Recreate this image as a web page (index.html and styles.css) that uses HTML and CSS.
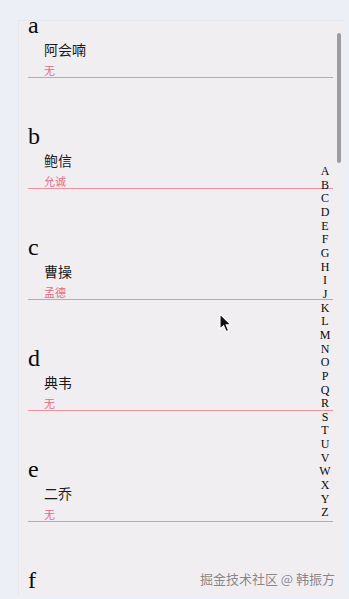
FILE: index.html
```html
<!DOCTYPE html>
<html lang="zh">
<head>
<meta charset="utf-8">
<title>通讯录</title>
<link rel="stylesheet" href="styles.css">
</head>
<body>
<div class="panel">
  <div class="list">
    <section class="group">
      <h2 class="letter">a</h2>
      <div class="name">阿会喃</div>
      <div class="sub">无</div>
    </section>
    <section class="group">
      <h2 class="letter">b</h2>
      <div class="name">鲍信</div>
      <div class="sub">允诚</div>
    </section>
    <section class="group">
      <h2 class="letter">c</h2>
      <div class="name">曹操</div>
      <div class="sub">孟德</div>
    </section>
    <section class="group">
      <h2 class="letter">d</h2>
      <div class="name">典韦</div>
      <div class="sub">无</div>
    </section>
    <section class="group">
      <h2 class="letter">e</h2>
      <div class="name">二乔</div>
      <div class="sub">无</div>
    </section>
    <section class="group">
      <h2 class="letter">f</h2>
      <div class="name">法正</div>
      <div class="sub">孝直</div>
    </section>
  </div>
  <div class="scrollbar"></div>
  <ul class="index">
    <li>A</li><li>B</li><li>C</li><li>D</li><li>E</li><li>F</li><li>G</li><li>H</li><li>I</li><li>J</li><li>K</li><li>L</li><li>M</li><li>N</li><li>O</li><li>P</li><li>Q</li><li>R</li><li>S</li><li>T</li><li>U</li><li>V</li><li>W</li><li>X</li><li>Y</li><li>Z</li>
  </ul>
</div>
<div class="watermark">掘金技术社区 @ 韩振方</div>
<svg class="cursor" width="13" height="20" viewBox="0 0 13 20">
  <path d="M1 1 L1 16 L4.6 12.6 L7.2 18.6 L9.6 17.6 L7.1 11.8 L12 11.8 Z" fill="#111" stroke="#fff" stroke-width="1.1" stroke-linejoin="round"/>
</svg>
</body>
</html>
```

FILE: styles.css
```css
html, body {
  margin: 0;
  padding: 0;
}
body {
  width: 349px;
  height: 599px;
  overflow: hidden;
  background: #eceff5;
  position: relative;
  font-family: "Liberation Serif", "Noto Sans CJK SC", serif;
}
.panel {
  position: relative;
  margin: 21px 0 0 19px;
  width: 324px;
  height: 574px;
  background: #f1eef2;
  overflow: hidden;
  box-shadow: -1px 0 0 #e4e6ec, 0 -1px 0 #e6e7ec;
}
.list {
  margin-top: -8px;
  padding: 0 10px 0 9px;
  display: flex;
  flex-direction: column;
  gap: 46px;
}
.group {
  display: flex;
  flex-direction: column;
}
.letter {
  margin: 0;
  font-family: "Liberation Serif", serif;
  font-weight: normal;
  font-size: 24px;
  line-height: 24px;
  color: #0a0a0a;
}
.name {
  margin-top: 2px;
  padding-left: 16px;
  font-family: "Noto Sans CJK SC", sans-serif;
  font-size: 14px;
  line-height: 20px;
  color: #1a1a1a;
}
.sub {
  margin-top: 4px;
  padding-left: 16px;
  font-family: "Noto Sans CJK SC", sans-serif;
  font-size: 11px;
  line-height: 14px;
  color: #e66a86;
  border-bottom: 1px solid #f2909e;
}
.scrollbar {
  position: absolute;
  right: 2px;
  top: 12px;
  width: 4px;
  height: 130px;
  border-radius: 2px;
  background: #9c9ca1;
}
.index {
  position: absolute;
  left: 296px;
  top: 144px;
  width: 20px;
  margin: 0;
  padding: 0;
  list-style: none;
  text-align: center;
  font-family: "Liberation Serif", serif;
  font-size: 12px;
  line-height: 13.65px;
  color: #0a0a0a;
}
.watermark {
  position: absolute;
  right: 14px;
  top: 570px;
  font-family: "Noto Sans CJK SC", sans-serif;
  font-size: 13px;
  line-height: 17px;
  color: #86868a;
  text-shadow: 0 0 1px #ffffff;
}
.cursor {
  position: absolute;
  left: 219px;
  top: 313px;
}
```
